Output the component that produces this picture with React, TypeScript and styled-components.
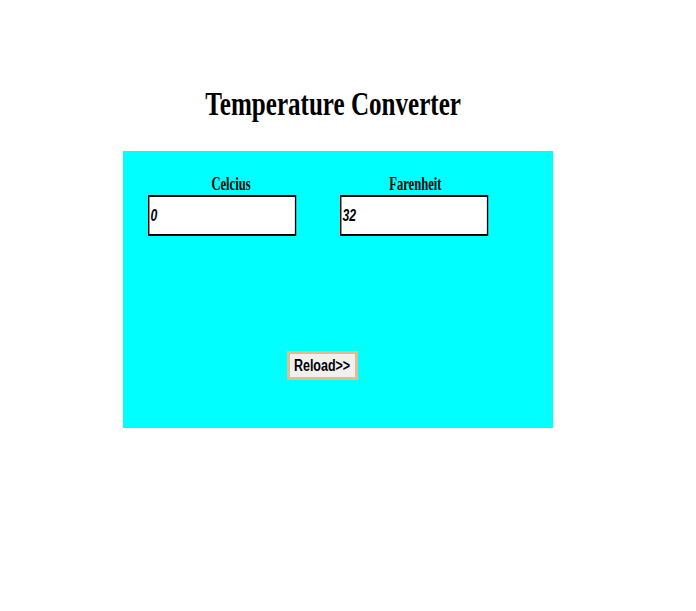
import React, { useState } from "react";
import styled, { createGlobalStyle } from "styled-components";

const Global = createGlobalStyle`
  html, body { margin: 0; padding: 0; background: #ffffff; }
  body { font-family: "Liberation Serif", "Times New Roman", serif; }
`;

const Page = styled.div`
  padding: 84px 0 0 123px;
  width: 430px;
`;

const Title = styled.h1`
  margin: 0 0 27px -10px;
  height: 40px;
  font-family: "Liberation Serif", "Times New Roman", serif;
  font-size: 33px;
  line-height: 40px;
  font-weight: bold;
  color: #000;
  text-align: center;
  white-space: nowrap;
`;

const Squeeze = styled.span<{ $x: number }>`
  display: inline-block;
  transform: scaleX(${(p) => p.$x});
  transform-origin: center;
`;

const Panel = styled.div`
  background: #00ffff;
  width: 430px;
  height: 277px;
  box-sizing: border-box;
  padding: 23px 0 48px 25px;
  display: flex;
  flex-direction: column;
`;

const Fields = styled.div`
  display: grid;
  grid-template-columns: 148px 148px;
  column-gap: 44px;
`;

const Field = styled.div`
  display: flex;
  flex-direction: column;
  gap: 1px;
`;

const Label = styled.div<{ $shift: number }>`
  height: 20px;
  font-family: "Liberation Serif", "Times New Roman", serif;
  font-size: 18px;
  line-height: 20px;
  font-weight: bold;
  color: #000;
  text-align: center;
  white-space: nowrap;
  padding-left: ${(p) => p.$shift}px;
`;

/* The reference renders the value in a narrow face; the box is drawn
   wider and compressed horizontally so it still measures 148px. */
const SCALE = 0.72;
const Input = styled.input`
  box-sizing: border-box;
  width: ${148 / SCALE}px;
  height: 41px;
  margin: 0;
  border-style: solid;
  border-color: #000;
  border-width: 2px ${2 / SCALE}px;
  background: #fff;
  padding: 0 0 0 ${1 / SCALE}px;
  font-family: "Liberation Sans", Arial, sans-serif;
  font-size: 17px;
  font-weight: bold;
  font-style: italic;
  color: #000;
  outline: none;
  transform: scaleX(${SCALE});
  transform-origin: left center;
`;

const ButtonRow = styled.div`
  margin-top: 115px;
  padding-left: 139px;
`;

const ReloadButton = styled.button`
  box-sizing: border-box;
  width: 71px;
  height: 29px;
  margin: 0;
  padding: 0;
  background: #f0f0f0;
  border: 3px solid #dfbd8e;
  font-family: "Liberation Sans", Arial, sans-serif;
  font-size: 16px;
  font-weight: bold;
  color: #000;
  cursor: pointer;
  white-space: nowrap;
  display: flex;
  align-items: center;
  justify-content: center;
`;

export default function App() {
  const [c, setC] = useState("0");
  const [f, setF] = useState("32");
  return (
    <>
      <Global />
      <Page>
        <Title>
          <Squeeze $x={0.76}>Temperature Converter</Squeeze>
        </Title>
        <Panel>
          <Fields>
            <Field>
              <Label $shift={18}>
                <Squeeze $x={0.7}>Celcius</Squeeze>
              </Label>
              <Input value={c} onChange={(e) => setC(e.target.value)} />
            </Field>
            <Field>
              <Label $shift={2}>
                <Squeeze $x={0.7}>Farenheit</Squeeze>
              </Label>
              <Input value={f} onChange={(e) => setF(e.target.value)} />
            </Field>
          </Fields>
          <ButtonRow>
            <ReloadButton onClick={() => { setC("0"); setF("32"); }}>
              <Squeeze $x={0.78}>Reload&gt;&gt;</Squeeze>
            </ReloadButton>
          </ButtonRow>
        </Panel>
      </Page>
    </>
  );
}
